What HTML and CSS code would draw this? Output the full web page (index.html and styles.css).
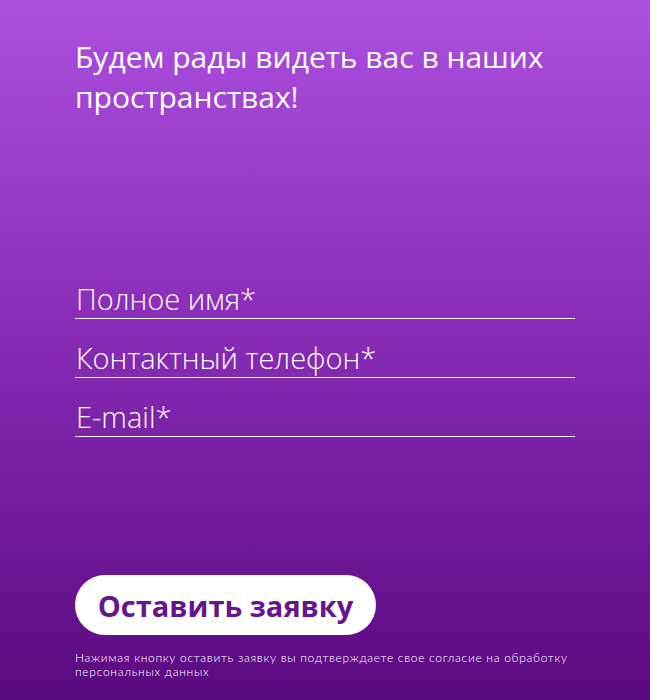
FILE: index.html
```html
<!DOCTYPE html>
<html lang="ru">
<head>
<meta charset="utf-8">
<link rel="stylesheet" href="styles.css">
</head>
<body>
<main class="page">
  <h1 class="title">Будем рады видеть вас в наших пространствах!</h1>
  <form class="form">
    <input class="field" type="text" placeholder="Полное имя*">
    <input class="field" type="tel" placeholder="Контактный телефон*">
    <input class="field" type="email" placeholder="E-mail*">
  </form>
  <button class="submit" type="button">Оставить заявку</button>
  <p class="note">Нажимая кнопку оставить заявку вы подтверждаете свое согласие на обработку персональных данных</p>
</main>
</body>
</html>
```
FILE: styles.css
```css
html, body {
  margin: 0;
  height: 100%;
}
body {
  background: linear-gradient(180deg, #ad4fdf 0%, #8a2db8 45%, #5a0a80 100%);
  font-family: "Open Sans", "Noto Sans", sans-serif;
  color: #fff;
  overflow: hidden;
}
.page {
  width: 500px;
  padding: 37px 75px 0;
  display: flex;
  flex-direction: column;
}
.title {
  margin: 0;
  font-size: 30px;
  line-height: 40px;
  font-weight: 400;
  width: 490px;
}
.form {
  margin-top: 158px;
  display: flex;
  flex-direction: column;
  gap: 15px;
}
.field {
  display: block;
  box-sizing: border-box;
  width: 500px;
  height: 44px;
  margin: 0;
  padding: 3px 0 0 1px;
  border: 0;
  border-bottom: 1px solid #fff;
  background: transparent;
  font-family: inherit;
  font-size: 29px;
  font-weight: 300;
  color: #fff;
  outline: none;
}
.field::placeholder {
  color: #fff;
  opacity: 1;
}
.submit {
  margin-top: 138px;
  width: 301px;
  height: 60px;
  border: 0;
  border-radius: 30px;
  background: #fff;
  color: #65168f;
  font-family: inherit;
  font-size: 29px;
  font-weight: 700;
  padding: 0;
  cursor: pointer;
}
.note {
  margin: 16px 0 0;
  font-family: "Lato", sans-serif;
  font-weight: 300;
  font-size: 12px;
  line-height: 14px;
  letter-spacing: 0.7px;
  color: #fff;
}
```
